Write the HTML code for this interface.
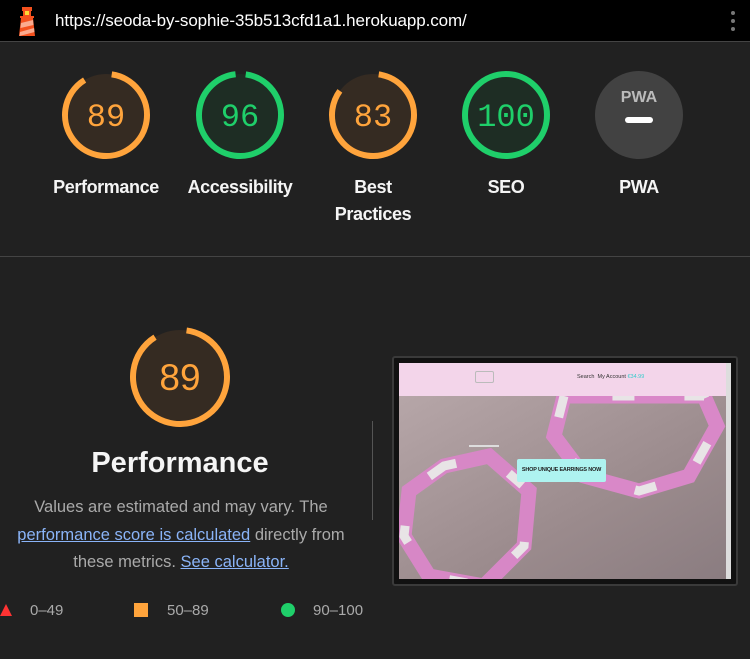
<!DOCTYPE html>
<html><head><meta charset="utf-8"><style>
*{margin:0;padding:0;box-sizing:border-box}
body{width:750px;height:659px;overflow:hidden;background:#212121;font-family:"Liberation Sans",sans-serif;position:relative;color:#fff}
.abs{position:absolute}
.lbl{position:absolute;width:140px;text-align:center;font-size:18px;line-height:27px;color:#f5f5f5;font-weight:bold;letter-spacing:-0.4px}
a{color:#8ab4f8;text-decoration:underline}
</style></head><body>
<div class="abs" style="left:0;top:0;width:750px;height:42px;background:#000;border-bottom:1px solid #444"></div>
<svg class="abs" style="left:14px;top:5px" width="26" height="32" viewBox="0 0 26 32">
<rect x="8" y="2" width="10" height="4" fill="#f4511e"/>
<rect x="9" y="5" width="8" height="6" fill="#f4511e"/><rect x="11" y="6" width="4" height="4" fill="#fdd835"/>
<rect x="6" y="11" width="14" height="2" fill="#f4511e"/>
<polygon points="7,13 19,13 21,31 5,31" fill="#f4511e"/>
<polygon points="7,18 19,15 19.5,20 6.5,23" fill="#fbab8f"/>
<polygon points="6,27 20,23 20.5,27 5.5,31" fill="#fbab8f"/>
</svg>
<div class="abs" style="left:55px;top:11px;font-size:17px;color:#fff;letter-spacing:-0.1px">https://seoda-by-sophie-35b513cfd1a1.herokuapp.com/</div>
<div class="abs" style="left:731px;top:11px;width:4px;height:4px;border-radius:2px;background:#777"></div>
<div class="abs" style="left:731px;top:19px;width:4px;height:4px;border-radius:2px;background:#777"></div>
<div class="abs" style="left:731px;top:27px;width:4px;height:4px;border-radius:2px;background:#777"></div>

<svg class="abs" style="left:0;top:43px" width="750" height="150">
<g transform="translate(106,72)"><circle r="41" fill="#352b22"/><circle r="41" fill="none" stroke="#ffa43c" stroke-width="6" stroke-dasharray="229 300" transform="rotate(-82)"/></g>
<g transform="translate(240,72)"><circle r="41" fill="#1e2d24"/><circle r="41" fill="none" stroke="#1fcf6a" stroke-width="6" stroke-dasharray="247 300" transform="rotate(-82)"/></g>
<g transform="translate(373,72)"><circle r="41" fill="#352b22"/><circle r="41" fill="none" stroke="#ffa43c" stroke-width="6" stroke-dasharray="213 300" transform="rotate(-82)"/></g>
<g transform="translate(506,72)"><circle r="41" fill="#1e2d24"/><circle r="41" fill="none" stroke="#1fcf6a" stroke-width="6"/></g>
<g transform="translate(639,72)"><circle r="44" fill="#424242"/><rect x="-14" y="2" width="28" height="6" rx="3" fill="#fff"/>
<text x="0" y="-13" text-anchor="middle" font-family="Liberation Sans Narrow,Liberation Sans" font-weight="bold" font-size="16" fill="#bbb">PWA</text></g>
<g font-family="Liberation Mono,monospace" font-size="32" text-anchor="middle">
<text x="106" y="83" fill="#ffa43c">89</text><text x="240" y="83" fill="#1fcf6a">96</text>
<text x="373" y="83" fill="#ffa43c">83</text><text x="506" y="83" fill="#1fcf6a">100</text></g>
</svg>
<div class="lbl" style="left:36px;top:174px">Performance</div>
<div class="lbl" style="left:170px;top:174px">Accessibility</div>
<div class="lbl" style="left:303px;top:174px">Best<br>Practices</div>
<div class="lbl" style="left:436px;top:174px">SEO</div>
<div class="lbl" style="left:569px;top:174px">PWA</div>
<div class="abs" style="left:0;top:256px;width:750px;height:1px;background:#444"></div>

<svg class="abs" style="left:130px;top:327px" width="100" height="100">
<g transform="translate(50,50)"><circle r="47" fill="#352b22"/><circle r="47" fill="none" stroke="#ffa43c" stroke-width="6" stroke-dasharray="262 300" transform="rotate(-82)"/>
<text x="0" y="13" text-anchor="middle" font-family="Liberation Sans" font-size="37" fill="#ffa43c">89</text></g></svg>
<div class="abs" style="left:30px;top:447px;width:300px;text-align:center;font-size:29px;font-weight:bold;color:#f5f5f5">Performance</div>
<div class="abs" style="left:0;top:494px;width:362px;text-align:center;font-size:16.5px;line-height:27.5px;color:#aaa">Values are estimated and may vary. The<br><a>performance score is calculated</a> directly from<br>these metrics. <a>See calculator.</a></div>
<div class="abs" style="left:372px;top:421px;width:1px;height:99px;background:#555"></div>

<svg class="abs" style="left:0;top:602px" width="12" height="14"><polygon points="0,14 6,2 12,14" fill="#ff3333"/></svg>
<div class="abs" style="left:30px;top:602px;font-size:15px;color:#aaa">0–49</div>
<div class="abs" style="left:134px;top:603px;width:14px;height:14px;background:#ffa43c"></div>
<div class="abs" style="left:167px;top:602px;font-size:15px;color:#aaa">50–89</div>
<div class="abs" style="left:281px;top:603px;width:14px;height:14px;border-radius:7px;background:#1fcf6a"></div>
<div class="abs" style="left:313px;top:602px;font-size:15px;color:#aaa">90–100</div>

<div class="abs" style="left:392px;top:356px;width:346px;height:230px;background:#111;border:2px solid #3a3a3a;border-radius:3px"></div>
<div class="abs" style="left:399px;top:363px;width:332px;height:216px;overflow:hidden;background:#a89898">
<div class="abs" style="left:0;top:0;width:332px;height:33px;background:#f3d5ea"></div>
<div class="abs" style="left:76px;top:8px;width:19px;height:12px;border:1px solid #bbb;border-radius:2px"></div>
<div class="abs" style="left:178px;top:11px;font-size:5.5px;color:#333">Search&nbsp; My Account <span style="color:#3cc">€34.99</span></div>
<svg class="abs" style="left:0;top:33px" width="332" height="183">
<defs><linearGradient id="bg" x1="0" y1="0" x2="1" y2="1"><stop offset="0" stop-color="#b6a6a8"/><stop offset="0.6" stop-color="#9b8b8d"/><stop offset="1" stop-color="#8a7c80"/></linearGradient></defs>
<rect width="332" height="183" fill="url(#bg)"/>
<polygon points="165,0 155,40 185,80 240,95 290,80 318,30 305,0" fill="none" stroke="#d988c8" stroke-width="15"/>
<polygon points="165,0 155,40 185,80 240,95 290,80 318,30 305,0" fill="none" stroke="#e8e4e6" stroke-width="9" stroke-dasharray="22 50"/>
<polygon points="45,70 10,95 5,140 30,180 85,190 125,150 130,95 90,60" fill="none" stroke="#d787c6" stroke-width="15"/>
<polygon points="45,70 10,95 5,140 30,180 85,190 125,150 130,95 90,60" fill="none" stroke="#e8e4e6" stroke-width="9" stroke-dasharray="18 60"/>
<line x1="70" y1="50" x2="100" y2="50" stroke="#ddd" stroke-width="2"/>
</svg>
<div class="abs" style="left:118px;top:96px;width:89px;height:23px;background:#aef3f0;border-radius:2px;font-size:5.5px;color:#222;text-align:center;line-height:23px;white-space:nowrap;font-weight:bold;letter-spacing:-0.2px">SHOP UNIQUE EARRINGS NOW</div>
<div class="abs" style="left:327px;top:0;width:5px;height:216px;background:#ddd"></div>
</div>
</body></html>
